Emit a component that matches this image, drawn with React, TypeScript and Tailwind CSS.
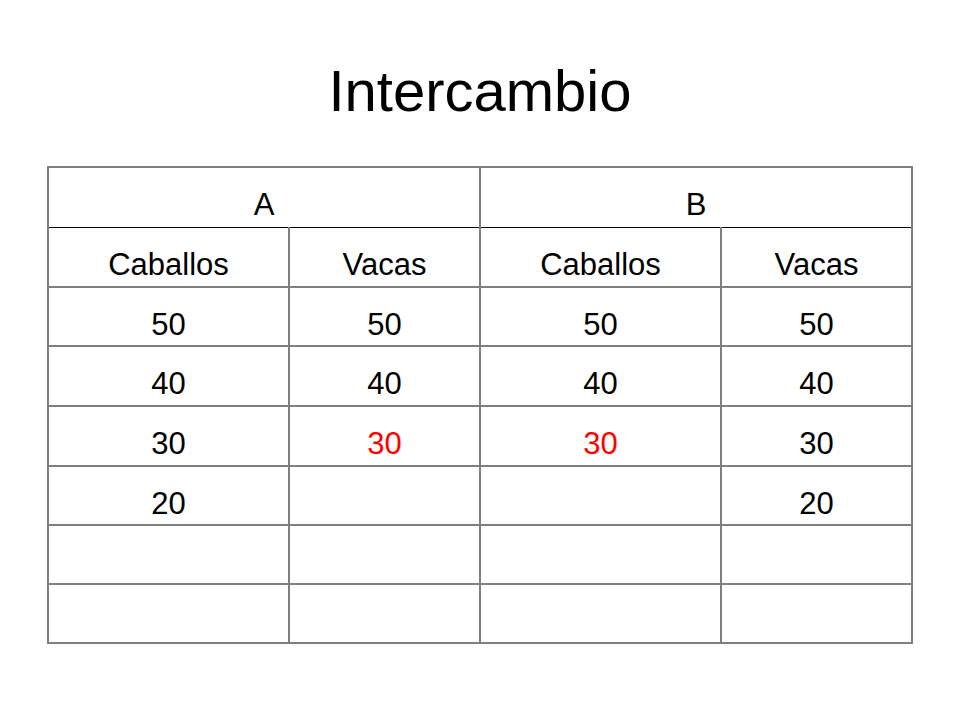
const rows: { v: string; red?: boolean }[][] = [
  [{ v: "50" }, { v: "50" }, { v: "50" }, { v: "50" }],
  [{ v: "40" }, { v: "40" }, { v: "40" }, { v: "40" }],
  [{ v: "30" }, { v: "30", red: true }, { v: "30", red: true }, { v: "30" }],
  [{ v: "20" }, { v: "" }, { v: "" }, { v: "20" }],
  [{ v: "" }, { v: "" }, { v: "" }, { v: "" }],
  [{ v: "" }, { v: "" }, { v: "" }, { v: "" }],
];

const heights = ["h-[59px]", "h-[60px]", "h-[60px]", "h-[59px]", "h-[59px]", "h-[59px]"];

export default function App() {
  return (
    <div className="w-[960px] h-[720px] bg-white text-black font-['Liberation_Sans',Arial,sans-serif]">
      <div className="h-[166px] pt-[62px] text-center">
        <h1 className="text-[58px] leading-none">Intercambio</h1>
      </div>

      <table className="ml-[47px] w-[864px] table-fixed border-collapse text-[31px] leading-none">
        <colgroup>
          <col className="w-[241px]" />
          <col className="w-[191px]" />
          <col className="w-[241px]" />
          <col className="w-[191px]" />
        </colgroup>
        <tbody>
          <tr className="h-[60px]">
            <td colSpan={2} className={cell + " border-b border-b-black"}>A</td>
            <td colSpan={2} className={cell + " border-b border-b-black"}>B</td>
          </tr>
          <tr className="h-[60px]">
            {["Caballos", "Vacas", "Caballos", "Vacas"].map((h, i) => (
              <td key={i} className={cell + " border-t border-t-black"}>{h}</td>
            ))}
          </tr>
          {rows.map((r, i) => (
            <tr key={i} className={heights[i]}>
              {r.map((c, j) => (
                <td key={j} className={cell + (c.red ? " text-[#ff0000]" : "")}>
                  {c.v}
                </td>
              ))}
            </tr>
          ))}
        </tbody>
      </table>
    </div>
  );
}

const cell = "border-2 border-[#7f7f7f] p-0 pt-[21px] align-top text-center";
